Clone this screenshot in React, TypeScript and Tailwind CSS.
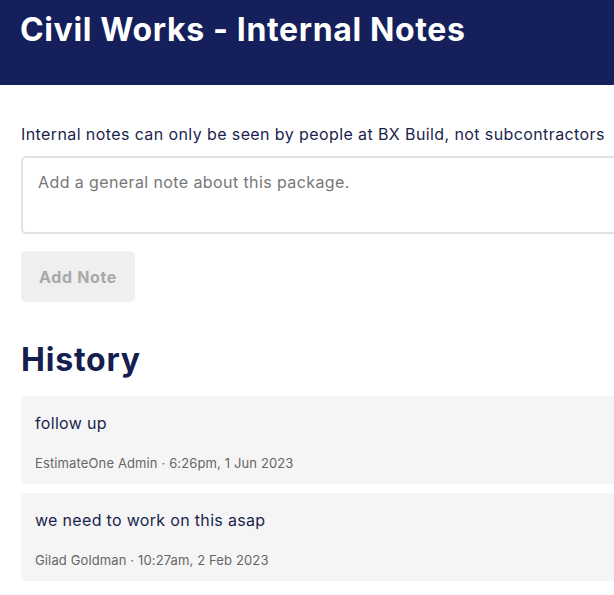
const notes = [
  { text: 'follow up', author: 'EstimateOne Admin', time: '6:26pm, 1 Jun 2023' },
  { text: 'we need to work on this asap', author: 'Gilad Goldman', time: '10:27am, 2 Feb 2023' },
];

export default function App() {
  return (
    <div className="w-screen h-screen overflow-hidden bg-white font-['Inter',sans-serif] text-[#1b1f4d]">
      <div className="w-[800px]">
        <header className="h-[85px] bg-[#141f5b] px-5 pt-[10px]">
          <h1 className="text-[32px] leading-[40px] font-bold tracking-[0.02em] text-white">
            Civil Works - Internal Notes
          </h1>
        </header>

        <main className="px-[21px]">
          <p className="mt-[37px] text-base leading-6 tracking-[0.025em]">
            Internal notes can only be seen by people at BX Build, not subcontractors
          </p>
          <textarea
            placeholder="Add a general note about this package."
            className="mt-[10px] block w-full h-[78px] border-2 border-[#e2e2e2] rounded-[5px] px-[15px] pt-[12px] text-base leading-6 tracking-[0.025em] resize-none outline-none placeholder:text-[#777777]"
          />
          <button
            disabled
            className="mt-[17px] w-[114px] h-[51px] rounded-[5px] bg-[#efefef] text-[#a9a9a9] text-base font-bold tracking-[0.04em]"
          >
            Add Note
          </button>

          <h2 className="mt-[38px] text-[32px] leading-[40px] font-bold tracking-[0.025em] text-[#161d4f]">History</h2>

          <div className="mt-4 flex flex-col gap-[9px]">
            {notes.map((n) => (
              <div key={n.text} className="bg-[#f5f5f5] rounded-[5px] px-[14px] pt-[15px] pb-[13px]">
                <div className="text-base leading-6 tracking-[0.02em]">{n.text}</div>
                <div className="mt-5 text-[13px] leading-4 tracking-[0.01em] text-[#666666]">
                  {n.author} · {n.time}
                </div>
              </div>
            ))}
          </div>
        </main>
      </div>
    </div>
  );
}
